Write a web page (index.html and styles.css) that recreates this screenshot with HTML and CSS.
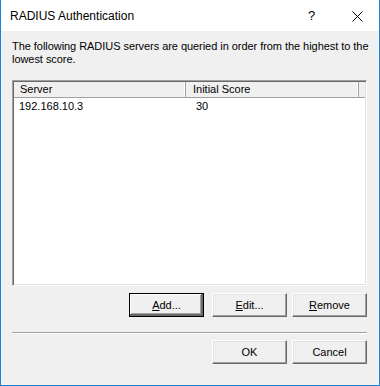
FILE: index.html
```html
<!DOCTYPE html>
<html>
<head>
<meta charset="utf-8">
<link rel="stylesheet" href="styles.css">
</head>
<body>
<div class="window">
  <div class="titlebar">
    <span class="title">RADIUS Authentication</span>
    <span class="help">?</span>
    <span class="close">
      <svg width="11" height="11" viewBox="0 0 11 11"><path d="M0.5 0.5 L10.5 10.5 M10.5 0.5 L0.5 10.5" stroke="#000" stroke-width="1" fill="none"/></svg>
    </span>
  </div>
  <div class="body">
    <p class="intro">The following RADIUS servers are queried in order from the highest to the lowest score.</p>
    <div class="listbox">
      <div class="header">
        <div class="hcell c1">Server</div>
        <div class="hcell c2">Initial Score</div>
        <div class="hcell c3"></div>
      </div>
      <div class="row">
        <div class="cell c1">192.168.10.3</div>
        <div class="cell c2">30</div>
      </div>
    </div>
    <div class="actions">
      <button class="btn default"><u>A</u>dd...</button>
      <button class="btn edit"><u>E</u>dit...</button>
      <button class="btn remove"><u>R</u>emove</button>
    </div>
    <div class="separator"></div>
    <div class="footer">
      <button class="btn ok">OK</button>
      <button class="btn cancel">Cancel</button>
    </div>
  </div>
</div>
</body>
</html>
```

FILE: styles.css
```css
* { box-sizing: border-box; }
html, body { margin: 0; padding: 0; }
body {
  width: 380px;
  height: 386px;
  overflow: hidden;
  font-family: "Liberation Sans", Arial, sans-serif;
  font-size: 11px;
  color: #000;
}
.window {
  width: 380px;
  height: 386px;
  border: 1px solid #1883d7;
  border-top: none;
  background: #f0f0f0;
  display: flex;
  flex-direction: column;
}
.titlebar {
  height: 31px;
  background: #fff;
  display: flex;
  align-items: center;
  position: relative;
}
.title {
  font-size: 12px;
  margin-left: 9px;
  padding-top: 1px;
}
.help {
  position: absolute;
  left: 307px;
  top: 8px;
  font-size: 13px;
}
.close {
  position: absolute;
  left: 351px;
  top: 11px;
  line-height: 0;
}
.body {
  flex: 1;
  padding: 9px 11px 0 11px;
  display: flex;
  flex-direction: column;
}
.intro {
  margin: 0;
  line-height: 13px;
  width: 358px;
  letter-spacing: -0.05px;
}
.listbox {
  margin-top: 14px;
  width: 355px;
  height: 206px;
  background: #fff;
  border: 1px solid;
  border-color: #a0a0a0 #ffffff #ffffff #a0a0a0;
  box-shadow: inset 1px 1px 0 #696969, inset -1px -1px 0 #e3e3e3;
  padding: 1px;
}
.header {
  display: flex;
  height: 16px;
  background: #f0f0f0;
  border-bottom: 1px solid #a0a0a0;
}
.hcell {
  line-height: 15px;
  padding-left: 6px;
  border-right: 1px solid #a0a0a0;
  box-shadow: inset -1px 0 0 #fff;
}
.hcell.c1 { width: 175px; }
.hcell.c2 { width: 176px; padding-left: 7px; }
.hcell.c3 { flex: 1; border-right: none; box-shadow: none; background: #f0f0f0; }
.row {
  display: flex;
  height: 14px;
  line-height: 14px;
  margin-top: 1px;
}
.cell { padding-left: 5px; }
.cell.c1 { width: 175px; }
.cell.c2 { width: 176px; padding-left: 7px; }
.actions {
  display: flex;
  margin-top: 7px;
  padding-left: 117px;
}
.btn {
  width: 75px;
  height: 24px;
  padding: 0;
  margin: 0;
  font-family: "Liberation Sans", Arial, sans-serif;
  font-size: 11px;
  color: #000;
  background: #f0f0f0;
  border: 1px solid;
  border-color: #ffffff #696969 #696969 #ffffff;
  box-shadow: inset -1px -1px 0 #a0a0a0, inset 1px 1px 0 #e3e3e3;
}
.btn.default {
  border: 1px solid #000;
  box-shadow: inset -2px -2px 0 #696969, inset 1px 1px 0 #fff, inset -3px -3px 0 #a0a0a0;
}
.btn.edit { margin-left: 8px; }
.btn.remove { margin-left: 5px; }
.separator {
  margin-top: 15px;
  width: 355px;
  height: 2px;
  border-top: 1px solid #a0a0a0;
  border-bottom: 1px solid #fff;
}
.footer {
  display: flex;
  justify-content: flex-end;
  margin-top: 6px;
  width: 355px;
}
.btn.cancel { margin-left: 5px; }
```
